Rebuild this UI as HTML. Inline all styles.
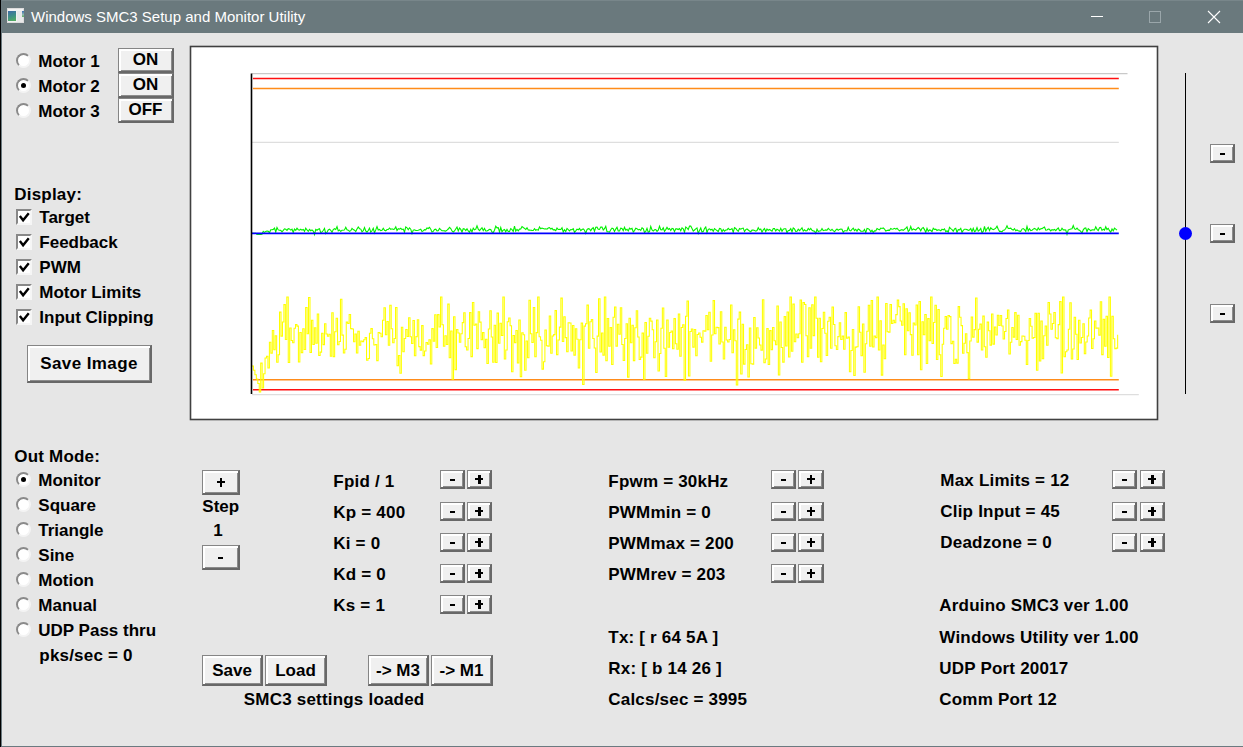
<!DOCTYPE html>
<html><head><meta charset="utf-8"><style>
*{margin:0;padding:0;box-sizing:border-box}
html,body{width:1243px;height:747px;overflow:hidden;background:#e6e6e6;font-family:"Liberation Sans", sans-serif}
#frame{position:absolute;left:0;top:0;width:1243px;height:747px}
#lb{position:absolute;left:0;top:0;width:1px;height:747px;background:#000}
#lb2{position:absolute;left:1px;top:0;width:1px;height:747px;background:#6b7a80}
#bb{position:absolute;left:1px;top:746px;width:1242px;height:1px;background:#6b7a80}
#title{position:absolute;left:1px;top:0;width:1242px;height:33px;background:#6a797d;border-top:1px solid #78868a}
#ttxt{position:absolute;left:31px;top:7px;font:15px "Liberation Sans", sans-serif;color:#fff;white-space:pre;line-height:20px}
.t{position:absolute;font:bold 17px "Liberation Sans", sans-serif;letter-spacing:0;white-space:pre;line-height:20px;color:#000}
.s{letter-spacing:0.2px}
.btn{position:absolute;background:#f0f0f0;border-top:1px solid #858585;border-left:1px solid #858585;border-right:2px solid #686868;border-bottom:2px solid #686868;box-shadow:inset 2px 2px 0 #fff, inset -1px -1px 0 #8c8c8c;display:flex;align-items:center;justify-content:center;font:bold 17px "Liberation Sans", sans-serif;letter-spacing:0;white-space:pre;color:#000}
.mi{display:block;width:5px;height:1.6px;background:#000;margin-top:2px}
.pl{display:block;position:relative;width:8px;height:9px}
.pl:before{content:"";position:absolute;left:0;top:3.5px;width:8px;height:2px;background:#000}
.pl:after{content:"";position:absolute;left:3px;top:0;width:2.5px;height:9px;background:#000}
.rad{position:absolute;width:15px;height:15px;border-radius:50%;background:#fff;border:2px solid;border-color:#8a8a8a #f4f4f4 #f4f4f4 #8a8a8a;transform:rotate(0deg)}
.rad i{position:absolute;left:3px;top:3px;width:5px;height:5px;border-radius:50%;background:#000}
.chk{position:absolute;width:16px;height:16px;background:#fff;border-top:2px solid #888;border-left:2px solid #888;border-right:2px solid #f6f6f6;border-bottom:2px solid #f6f6f6}
.chk svg{position:absolute;left:-2px;top:-2px}
</style></head>
<body>
<svg style="position:absolute;left:0;top:0" width="1243" height="747">
<rect x="190.5" y="46.5" width="967" height="373" fill="#fff" stroke="#404040" stroke-width="1.6"/>
<line x1="252" y1="73.6" x2="1127.5" y2="73.6" stroke="#c9c9c9" stroke-width="1.3"/>
<line x1="252" y1="142.4" x2="1118.8" y2="142.4" stroke="#dedede" stroke-width="1.3"/>
<line x1="252" y1="394.6" x2="1138.8" y2="394.6" stroke="#dedede" stroke-width="1.3"/>
<line x1="253" y1="78.6" x2="1118.8" y2="78.6" stroke="#ff1010" stroke-width="1.5"/>
<line x1="253" y1="88.5" x2="1118.8" y2="88.5" stroke="#ff8c1a" stroke-width="1.4"/>
<line x1="253" y1="379.8" x2="1118.8" y2="379.8" stroke="#ff8c1a" stroke-width="1.4"/>
<line x1="253" y1="389.8" x2="1118.8" y2="389.8" stroke="#ff1010" stroke-width="1.5"/>
<polyline points="252.00,366.0 252.00,366.0 253.45,366.0 253.45,370.3 254.90,370.3 254.90,374.7 256.35,374.7 256.35,379.0 257.80,379.0 257.80,383.4 259.25,383.4 259.25,392.0 260.70,392.0 260.70,363.1 262.15,363.1 262.15,387.9 263.60,387.9 263.60,373.8 265.05,373.8 265.05,357.9 266.50,357.9 266.50,356.3 267.95,356.3 267.95,368.0 269.40,368.0 269.40,342.3 270.85,342.3 270.85,353.1 272.30,353.1 272.30,330.5 273.75,330.5 273.75,349.7 275.20,349.7 275.20,335.8 276.65,335.8 276.65,362.2 278.10,362.2 278.10,354.8 279.55,354.8 279.55,312.1 281.00,312.1 281.00,336.1 282.45,336.1 282.45,322.0 283.90,322.0 283.90,304.6 285.35,304.6 285.35,339.5 286.80,339.5 286.80,297.0 288.25,297.0 288.25,362.5 289.70,362.5 289.70,328.0 291.15,328.0 291.15,340.4 292.60,340.4 292.60,342.8 294.05,342.8 294.05,328.2 295.50,328.2 295.50,324.6 296.95,324.6 296.95,326.1 298.40,326.1 298.40,362.0 299.85,362.0 299.85,332.5 301.30,332.5 301.30,352.6 302.75,352.6 302.75,328.8 304.20,328.8 304.20,349.5 305.65,349.5 305.65,307.4 307.10,307.4 307.10,333.8 308.55,333.8 308.55,297.4 310.00,297.4 310.00,352.4 311.45,352.4 311.45,320.2 312.90,320.2 312.90,344.4 314.35,344.4 314.35,327.7 315.80,327.7 315.80,343.3 317.25,343.3 317.25,313.9 318.70,313.9 318.70,355.5 320.15,355.5 320.15,352.1 321.60,352.1 321.60,333.3 323.05,333.3 323.05,344.6 324.50,344.6 324.50,323.7 325.95,323.7 325.95,334.0 327.40,334.0 327.40,336.2 328.85,336.2 328.85,334.3 330.30,334.3 330.30,356.2 331.75,356.2 331.75,312.7 333.20,312.7 333.20,356.6 334.65,356.6 334.65,331.7 336.10,331.7 336.10,318.3 337.55,318.3 337.55,344.8 339.00,344.8 339.00,341.5 340.45,341.5 340.45,299.3 341.90,299.3 341.90,335.1 343.35,335.1 343.35,353.0 344.80,353.0 344.80,349.3 346.25,349.3 346.25,322.1 347.70,322.1 347.70,323.4 349.15,323.4 349.15,314.4 350.60,314.4 350.60,328.6 352.05,328.6 352.05,329.0 353.50,329.0 353.50,341.7 354.95,341.7 354.95,333.9 356.40,333.9 356.40,352.9 357.85,352.9 357.85,331.3 359.30,331.3 359.30,345.2 360.75,345.2 360.75,340.9 362.20,340.9 362.20,341.6 363.65,341.6 363.65,339.8 365.10,339.8 365.10,337.6 366.55,337.6 366.55,360.3 368.00,360.3 368.00,358.5 369.45,358.5 369.45,333.3 370.90,333.3 370.90,328.6 372.35,328.6 372.35,338.7 373.80,338.7 373.80,344.9 375.25,344.9 375.25,344.5 376.70,344.5 376.70,360.6 378.15,360.6 378.15,332.4 379.60,332.4 379.60,333.3 381.05,333.3 381.05,336.8 382.50,336.8 382.50,320.2 383.95,320.2 383.95,307.8 385.40,307.8 385.40,334.7 386.85,334.7 386.85,321.4 388.30,321.4 388.30,345.3 389.75,345.3 389.75,305.3 391.20,305.3 391.20,328.7 392.65,328.7 392.65,342.8 394.10,342.8 394.10,338.5 395.55,338.5 395.55,307.4 397.00,307.4 397.00,365.8 398.45,365.8 398.45,355.4 399.90,355.4 399.90,373.2 401.35,373.2 401.35,327.2 402.80,327.2 402.80,351.8 404.25,351.8 404.25,338.4 405.70,338.4 405.70,329.5 407.15,329.5 407.15,336.5 408.60,336.5 408.60,317.8 410.05,317.8 410.05,336.8 411.50,336.8 411.50,343.5 412.95,343.5 412.95,320.4 414.40,320.4 414.40,355.8 415.85,355.8 415.85,336.6 417.30,336.6 417.30,319.7 418.75,319.7 418.75,346.6 420.20,346.6 420.20,350.1 421.65,350.1 421.65,325.6 423.10,325.6 423.10,355.6 424.55,355.6 424.55,350.9 426.00,350.9 426.00,342.5 427.45,342.5 427.45,344.2 428.90,344.2 428.90,339.7 430.35,339.7 430.35,363.9 431.80,363.9 431.80,328.6 433.25,328.6 433.25,341.3 434.70,341.3 434.70,314.7 436.15,314.7 436.15,347.4 437.60,347.4 437.60,314.6 439.05,314.6 439.05,327.0 440.50,327.0 440.50,297.0 441.95,297.0 441.95,324.7 443.40,324.7 443.40,346.3 444.85,346.3 444.85,335.7 446.30,335.7 446.30,344.4 447.75,344.4 447.75,304.1 449.20,304.1 449.20,357.7 450.65,357.7 450.65,330.9 452.10,330.9 452.10,379.3 453.55,379.3 453.55,316.8 455.00,316.8 455.00,369.6 456.45,369.6 456.45,329.4 457.90,329.4 457.90,332.9 459.35,332.9 459.35,342.2 460.80,342.2 460.80,333.7 462.25,333.7 462.25,322.6 463.70,322.6 463.70,312.7 465.15,312.7 465.15,346.8 466.60,346.8 466.60,350.0 468.05,350.0 468.05,338.4 469.50,338.4 469.50,312.6 470.95,312.6 470.95,356.6 472.40,356.6 472.40,302.5 473.85,302.5 473.85,325.2 475.30,325.2 475.30,324.1 476.75,324.1 476.75,348.6 478.20,348.6 478.20,311.7 479.65,311.7 479.65,322.1 481.10,322.1 481.10,339.7 482.55,339.7 482.55,332.6 484.00,332.6 484.00,347.7 485.45,347.7 485.45,339.3 486.90,339.3 486.90,363.4 488.35,363.4 488.35,328.9 489.80,328.9 489.80,310.8 491.25,310.8 491.25,336.9 492.70,336.9 492.70,362.3 494.15,362.3 494.15,325.3 495.60,325.3 495.60,362.5 497.05,362.5 497.05,313.1 498.50,313.1 498.50,343.3 499.95,343.3 499.95,323.3 501.40,323.3 501.40,335.5 502.85,335.5 502.85,297.0 504.30,297.0 504.30,358.9 505.75,358.9 505.75,350.0 507.20,350.0 507.20,321.7 508.65,321.7 508.65,318.0 510.10,318.0 510.10,325.7 511.55,325.7 511.55,371.8 513.00,371.8 513.00,335.5 514.45,335.5 514.45,342.6 515.90,342.6 515.90,330.4 517.35,330.4 517.35,363.0 518.80,363.0 518.80,319.9 520.25,319.9 520.25,376.6 521.70,376.6 521.70,332.7 523.15,332.7 523.15,334.8 524.60,334.8 524.60,370.3 526.05,370.3 526.05,340.9 527.50,340.9 527.50,357.8 528.95,357.8 528.95,300.3 530.40,300.3 530.40,333.7 531.85,333.7 531.85,342.4 533.30,342.4 533.30,307.5 534.75,307.5 534.75,356.8 536.20,356.8 536.20,332.6 537.65,332.6 537.65,297.0 539.10,297.0 539.10,336.7 540.55,336.7 540.55,340.3 542.00,340.3 542.00,369.1 543.45,369.1 543.45,361.8 544.90,361.8 544.90,330.0 546.35,330.0 546.35,345.8 547.80,345.8 547.80,346.1 549.25,346.1 549.25,316.0 550.70,316.0 550.70,353.2 552.15,353.2 552.15,335.9 553.60,335.9 553.60,334.6 555.05,334.6 555.05,310.6 556.50,310.6 556.50,354.6 557.95,354.6 557.95,339.9 559.40,339.9 559.40,327.1 560.85,327.1 560.85,298.1 562.30,298.1 562.30,341.5 563.75,341.5 563.75,316.7 565.20,316.7 565.20,337.6 566.65,337.6 566.65,351.7 568.10,351.7 568.10,322.7 569.55,322.7 569.55,323.0 571.00,323.0 571.00,350.9 572.45,350.9 572.45,325.4 573.90,325.4 573.90,355.1 575.35,355.1 575.35,328.7 576.80,328.7 576.80,339.2 578.25,339.2 578.25,368.0 579.70,368.0 579.70,339.8 581.15,339.8 581.15,323.1 582.60,323.1 582.60,384.5 584.05,384.5 584.05,326.1 585.50,326.1 585.50,323.8 586.95,323.8 586.95,305.1 588.40,305.1 588.40,348.2 589.85,348.2 589.85,321.7 591.30,321.7 591.30,319.6 592.75,319.6 592.75,338.5 594.20,338.5 594.20,347.9 595.65,347.9 595.65,372.5 597.10,372.5 597.10,336.1 598.55,336.1 598.55,298.8 600.00,298.8 600.00,351.9 601.45,351.9 601.45,333.0 602.90,333.0 602.90,355.1 604.35,355.1 604.35,297.0 605.80,297.0 605.80,360.7 607.25,360.7 607.25,318.5 608.70,318.5 608.70,346.2 610.15,346.2 610.15,327.6 611.60,327.6 611.60,364.5 613.05,364.5 613.05,317.2 614.50,317.2 614.50,306.9 615.95,306.9 615.95,346.1 617.40,346.1 617.40,324.3 618.85,324.3 618.85,334.2 620.30,334.2 620.30,307.8 621.75,307.8 621.75,344.5 623.20,344.5 623.20,360.4 624.65,360.4 624.65,338.4 626.10,338.4 626.10,323.8 627.55,323.8 627.55,377.1 629.00,377.1 629.00,318.3 630.45,318.3 630.45,342.8 631.90,342.8 631.90,325.3 633.35,325.3 633.35,360.6 634.80,360.6 634.80,327.8 636.25,327.8 636.25,310.7 637.70,310.7 637.70,336.9 639.15,336.9 639.15,359.4 640.60,359.4 640.60,357.1 642.05,357.1 642.05,333.1 643.50,333.1 643.50,379.3 644.95,379.3 644.95,322.5 646.40,322.5 646.40,353.3 647.85,353.3 647.85,336.2 649.30,336.2 649.30,318.2 650.75,318.2 650.75,321.1 652.20,321.1 652.20,329.7 653.65,329.7 653.65,357.7 655.10,357.7 655.10,341.7 656.55,341.7 656.55,320.0 658.00,320.0 658.00,371.0 659.45,371.0 659.45,353.5 660.90,353.5 660.90,328.2 662.35,328.2 662.35,307.9 663.80,307.9 663.80,348.3 665.25,348.3 665.25,376.5 666.70,376.5 666.70,320.0 668.15,320.0 668.15,347.3 669.60,347.3 669.60,332.5 671.05,332.5 671.05,330.9 672.50,330.9 672.50,348.7 673.95,348.7 673.95,318.6 675.40,318.6 675.40,343.7 676.85,343.7 676.85,349.3 678.30,349.3 678.30,314.0 679.75,314.0 679.75,356.2 681.20,356.2 681.20,327.5 682.65,327.5 682.65,324.8 684.10,324.8 684.10,380.1 685.55,380.1 685.55,316.2 687.00,316.2 687.00,301.0 688.45,301.0 688.45,376.0 689.90,376.0 689.90,331.5 691.35,331.5 691.35,328.9 692.80,328.9 692.80,347.1 694.25,347.1 694.25,329.4 695.70,329.4 695.70,355.8 697.15,355.8 697.15,334.5 698.60,334.5 698.60,332.9 700.05,332.9 700.05,337.3 701.50,337.3 701.50,342.1 702.95,342.1 702.95,330.7 704.40,330.7 704.40,331.1 705.85,331.1 705.85,315.4 707.30,315.4 707.30,329.8 708.75,329.8 708.75,312.2 710.20,312.2 710.20,361.2 711.65,361.2 711.65,335.0 713.10,335.0 713.10,300.6 714.55,300.6 714.55,333.8 716.00,333.8 716.00,327.3 717.45,327.3 717.45,327.6 718.90,327.6 718.90,343.9 720.35,343.9 720.35,311.7 721.80,311.7 721.80,341.9 723.25,341.9 723.25,358.9 724.70,358.9 724.70,327.3 726.15,327.3 726.15,339.9 727.60,339.9 727.60,341.9 729.05,341.9 729.05,339.5 730.50,339.5 730.50,305.0 731.95,305.0 731.95,352.7 733.40,352.7 733.40,329.8 734.85,329.8 734.85,340.8 736.30,340.8 736.30,384.9 737.75,384.9 737.75,319.1 739.20,319.1 739.20,312.1 740.65,312.1 740.65,374.0 742.10,374.0 742.10,324.3 743.55,324.3 743.55,364.1 745.00,364.1 745.00,349.4 746.45,349.4 746.45,344.8 747.90,344.8 747.90,377.0 749.35,377.0 749.35,327.9 750.80,327.9 750.80,363.7 752.25,363.7 752.25,364.1 753.70,364.1 753.70,317.4 755.15,317.4 755.15,348.1 756.60,348.1 756.60,327.7 758.05,327.7 758.05,337.9 759.50,337.9 759.50,344.9 760.95,344.9 760.95,350.1 762.40,350.1 762.40,299.8 763.85,299.8 763.85,362.7 765.30,362.7 765.30,359.0 766.75,359.0 766.75,328.6 768.20,328.6 768.20,364.5 769.65,364.5 769.65,330.6 771.10,330.6 771.10,349.6 772.55,349.6 772.55,327.4 774.00,327.4 774.00,340.7 775.45,340.7 775.45,344.7 776.90,344.7 776.90,305.9 778.35,305.9 778.35,374.9 779.80,374.9 779.80,322.0 781.25,322.0 781.25,347.5 782.70,347.5 782.70,362.1 784.15,362.1 784.15,316.6 785.60,316.6 785.60,346.0 787.05,346.0 787.05,311.9 788.50,311.9 788.50,356.9 789.95,356.9 789.95,297.0 791.40,297.0 791.40,351.3 792.85,351.3 792.85,304.1 794.30,304.1 794.30,341.6 795.75,341.6 795.75,334.0 797.20,334.0 797.20,337.8 798.65,337.8 798.65,333.7 800.10,333.7 800.10,300.0 801.55,300.0 801.55,362.2 803.00,362.2 803.00,302.4 804.45,302.4 804.45,304.5 805.90,304.5 805.90,335.8 807.35,335.8 807.35,356.8 808.80,356.8 808.80,307.7 810.25,307.7 810.25,348.3 811.70,348.3 811.70,304.7 813.15,304.7 813.15,335.6 814.60,335.6 814.60,297.0 816.05,297.0 816.05,318.2 817.50,318.2 817.50,357.2 818.95,357.2 818.95,318.2 820.40,318.2 820.40,361.7 821.85,361.7 821.85,328.5 823.30,328.5 823.30,312.2 824.75,312.2 824.75,333.3 826.20,333.3 826.20,355.5 827.65,355.5 827.65,321.2 829.10,321.2 829.10,317.2 830.55,317.2 830.55,348.2 832.00,348.2 832.00,306.9 833.45,306.9 833.45,324.4 834.90,324.4 834.90,345.7 836.35,345.7 836.35,349.4 837.80,349.4 837.80,336.6 839.25,336.6 839.25,322.7 840.70,322.7 840.70,339.5 842.15,339.5 842.15,336.1 843.60,336.1 843.60,349.3 845.05,349.3 845.05,312.6 846.50,312.6 846.50,338.3 847.95,338.3 847.95,337.1 849.40,337.1 849.40,371.8 850.85,371.8 850.85,350.5 852.30,350.5 852.30,329.5 853.75,329.5 853.75,375.5 855.20,375.5 855.20,347.1 856.65,347.1 856.65,346.8 858.10,346.8 858.10,306.8 859.55,306.8 859.55,332.2 861.00,332.2 861.00,355.8 862.45,355.8 862.45,323.9 863.90,323.9 863.90,372.3 865.35,372.3 865.35,343.8 866.80,343.8 866.80,331.3 868.25,331.3 868.25,305.3 869.70,305.3 869.70,346.2 871.15,346.2 871.15,300.4 872.60,300.4 872.60,347.0 874.05,347.0 874.05,336.1 875.50,336.1 875.50,337.6 876.95,337.6 876.95,297.0 878.40,297.0 878.40,349.9 879.85,349.9 879.85,320.8 881.30,320.8 881.30,375.1 882.75,375.1 882.75,345.0 884.20,345.0 884.20,358.8 885.65,358.8 885.65,303.4 887.10,303.4 887.10,331.7 888.55,331.7 888.55,332.1 890.00,332.1 890.00,304.4 891.45,304.4 891.45,323.4 892.90,323.4 892.90,320.2 894.35,320.2 894.35,322.8 895.80,322.8 895.80,314.6 897.25,314.6 897.25,300.1 898.70,300.1 898.70,306.6 900.15,306.6 900.15,321.0 901.60,321.0 901.60,325.2 903.05,325.2 903.05,303.7 904.50,303.7 904.50,354.7 905.95,354.7 905.95,308.8 907.40,308.8 907.40,330.7 908.85,330.7 908.85,312.8 910.30,312.8 910.30,334.6 911.75,334.6 911.75,355.3 913.20,355.3 913.20,323.0 914.65,323.0 914.65,324.9 916.10,324.9 916.10,304.9 917.55,304.9 917.55,354.8 919.00,354.8 919.00,301.4 920.45,301.4 920.45,369.8 921.90,369.8 921.90,321.8 923.35,321.8 923.35,334.7 924.80,334.7 924.80,314.5 926.25,314.5 926.25,363.5 927.70,363.5 927.70,318.6 929.15,318.6 929.15,340.8 930.60,340.8 930.60,297.0 932.05,297.0 932.05,343.4 933.50,343.4 933.50,322.4 934.95,322.4 934.95,305.3 936.40,305.3 936.40,359.5 937.85,359.5 937.85,309.5 939.30,309.5 939.30,354.8 940.75,354.8 940.75,376.4 942.20,376.4 942.20,344.2 943.65,344.2 943.65,328.3 945.10,328.3 945.10,316.4 946.55,316.4 946.55,329.2 948.00,329.2 948.00,315.4 949.45,315.4 949.45,316.6 950.90,316.6 950.90,343.6 952.35,343.6 952.35,341.2 953.80,341.2 953.80,363.5 955.25,363.5 955.25,359.2 956.70,359.2 956.70,363.1 958.15,363.1 958.15,306.6 959.60,306.6 959.60,317.3 961.05,317.3 961.05,325.6 962.50,325.6 962.50,353.3 963.95,353.3 963.95,343.3 965.40,343.3 965.40,333.7 966.85,333.7 966.85,352.6 968.30,352.6 968.30,378.8 969.75,378.8 969.75,340.9 971.20,340.9 971.20,316.9 972.65,316.9 972.65,337.1 974.10,337.1 974.10,329.6 975.55,329.6 975.55,297.9 977.00,297.9 977.00,342.1 978.45,342.1 978.45,329.2 979.90,329.2 979.90,324.1 981.35,324.1 981.35,349.9 982.80,349.9 982.80,316.1 984.25,316.1 984.25,346.7 985.70,346.7 985.70,357.3 987.15,357.3 987.15,322.1 988.60,322.1 988.60,330.7 990.05,330.7 990.05,345.1 991.50,345.1 991.50,313.9 992.95,313.9 992.95,344.1 994.40,344.1 994.40,327.0 995.85,327.0 995.85,334.9 997.30,334.9 997.30,315.3 998.75,315.3 998.75,325.5 1000.20,325.5 1000.20,315.4 1001.65,315.4 1001.65,325.9 1003.10,325.9 1003.10,339.0 1004.55,339.0 1004.55,331.5 1006.00,331.5 1006.00,318.5 1007.45,318.5 1007.45,309.9 1008.90,309.9 1008.90,354.0 1010.35,354.0 1010.35,342.3 1011.80,342.3 1011.80,327.4 1013.25,327.4 1013.25,337.1 1014.70,337.1 1014.70,312.6 1016.15,312.6 1016.15,339.4 1017.60,339.4 1017.60,315.2 1019.05,315.2 1019.05,345.3 1020.50,345.3 1020.50,341.6 1021.95,341.6 1021.95,335.9 1023.40,335.9 1023.40,336.3 1024.85,336.3 1024.85,340.2 1026.30,340.2 1026.30,364.4 1027.75,364.4 1027.75,340.5 1029.20,340.5 1029.20,318.5 1030.65,318.5 1030.65,326.3 1032.10,326.3 1032.10,338.2 1033.55,338.2 1033.55,337.5 1035.00,337.5 1035.00,313.3 1036.45,313.3 1036.45,370.3 1037.90,370.3 1037.90,313.2 1039.35,313.2 1039.35,360.9 1040.80,360.9 1040.80,320.9 1042.25,320.9 1042.25,358.7 1043.70,358.7 1043.70,335.7 1045.15,335.7 1045.15,325.9 1046.60,325.9 1046.60,345.2 1048.05,345.2 1048.05,302.4 1049.50,302.4 1049.50,314.0 1050.95,314.0 1050.95,329.2 1052.40,329.2 1052.40,323.4 1053.85,323.4 1053.85,312.5 1055.30,312.5 1055.30,337.8 1056.75,337.8 1056.75,338.6 1058.20,338.6 1058.20,324.6 1059.65,324.6 1059.65,301.6 1061.10,301.6 1061.10,373.0 1062.55,373.0 1062.55,297.0 1064.00,297.0 1064.00,356.8 1065.45,356.8 1065.45,351.8 1066.90,351.8 1066.90,349.9 1068.35,349.9 1068.35,329.2 1069.80,329.2 1069.80,302.7 1071.25,302.7 1071.25,358.9 1072.70,358.9 1072.70,349.0 1074.15,349.0 1074.15,317.2 1075.60,317.2 1075.60,334.2 1077.05,334.2 1077.05,359.5 1078.50,359.5 1078.50,320.3 1079.95,320.3 1079.95,342.9 1081.40,342.9 1081.40,337.4 1082.85,337.4 1082.85,323.7 1084.30,323.7 1084.30,353.8 1085.75,353.8 1085.75,342.0 1087.20,342.0 1087.20,336.0 1088.65,336.0 1088.65,318.0 1090.10,318.0 1090.10,310.1 1091.55,310.1 1091.55,348.4 1093.00,348.4 1093.00,338.8 1094.45,338.8 1094.45,320.9 1095.90,320.9 1095.90,328.1 1097.35,328.1 1097.35,327.9 1098.80,327.9 1098.80,335.1 1100.25,335.1 1100.25,301.7 1101.70,301.7 1101.70,354.6 1103.15,354.6 1103.15,319.3 1104.60,319.3 1104.60,346.2 1106.05,346.2 1106.05,316.2 1107.50,316.2 1107.50,357.5 1108.95,357.5 1108.95,297.0 1110.40,297.0 1110.40,376.2 1111.85,376.2 1111.85,316.3 1113.30,316.3 1113.30,338.8 1114.75,338.8 1114.75,348.6 1116.20,348.6 1116.20,348.1 1117.65,348.1 1117.65,334.8" fill="none" stroke="#ffff00" stroke-width="1.05"/>
<polyline points="252.00,233.2 253.25,233.2 254.50,233.2 255.75,233.2 257.00,234.5 258.25,234.5 259.50,234.5 260.75,234.5 262.00,234.3 263.25,231.4 264.50,232.4 265.75,231.4 267.00,231.0 268.25,231.3 269.50,232.7 270.75,229.8 272.00,229.7 273.25,229.4 274.50,228.1 275.75,232.0 277.00,227.5 278.25,229.9 279.50,230.3 280.75,230.4 282.00,231.8 283.25,230.4 284.50,228.8 285.75,229.3 287.00,230.4 288.25,228.7 289.50,228.9 290.75,230.1 292.00,229.2 293.25,232.4 294.50,229.1 295.75,230.4 297.00,228.3 298.25,229.7 299.50,230.2 300.75,229.2 302.00,230.1 303.25,229.5 304.50,231.4 305.75,228.2 307.00,230.0 308.25,231.3 309.50,229.3 310.75,230.7 312.00,230.0 313.25,231.0 314.50,234.5 315.75,229.3 317.00,230.2 318.25,229.3 319.50,228.8 320.75,232.7 322.00,231.9 323.25,230.5 324.50,228.5 325.75,233.6 327.00,232.3 328.25,229.9 329.50,229.2 330.75,230.3 332.00,232.4 333.25,229.6 334.50,228.7 335.75,229.4 337.00,226.6 338.25,230.9 339.50,230.0 340.75,231.5 342.00,230.2 343.25,230.3 344.50,229.9 345.75,227.3 347.00,229.8 348.25,230.2 349.50,231.4 350.75,230.7 352.00,228.4 353.25,229.6 354.50,230.2 355.75,231.6 357.00,228.9 358.25,227.0 359.50,228.7 360.75,229.1 362.00,231.8 363.25,230.6 364.50,227.6 365.75,230.9 367.00,232.2 368.25,230.5 369.50,228.1 370.75,232.1 372.00,230.8 373.25,228.3 374.50,232.9 375.75,229.9 377.00,226.6 378.25,230.0 379.50,229.5 380.75,230.6 382.00,230.3 383.25,228.3 384.50,230.3 385.75,230.8 387.00,229.5 388.25,229.5 389.50,228.0 390.75,229.4 392.00,228.8 393.25,229.5 394.50,229.0 395.75,226.9 397.00,230.5 398.25,228.6 399.50,229.2 400.75,228.2 402.00,229.6 403.25,229.1 404.50,232.2 405.75,226.9 407.00,227.8 408.25,229.7 409.50,227.8 410.75,229.2 412.00,233.5 413.25,230.1 414.50,229.8 415.75,230.5 417.00,230.5 418.25,230.3 419.50,229.8 420.75,229.3 422.00,231.5 423.25,230.9 424.50,229.7 425.75,229.9 427.00,228.0 428.25,228.5 429.50,227.3 430.75,229.3 432.00,232.0 433.25,231.4 434.50,229.5 435.75,229.2 437.00,230.9 438.25,230.8 439.50,228.4 440.75,229.6 442.00,230.7 443.25,230.7 444.50,230.9 445.75,231.1 447.00,230.1 448.25,229.0 449.50,227.4 450.75,228.5 452.00,231.0 453.25,232.0 454.50,231.0 455.75,229.0 457.00,227.1 458.25,231.0 459.50,228.1 460.75,229.4 462.00,232.0 463.25,228.7 464.50,229.0 465.75,230.5 467.00,228.8 468.25,231.0 469.50,232.3 470.75,229.3 472.00,232.0 473.25,228.2 474.50,229.9 475.75,229.2 477.00,225.8 478.25,229.2 479.50,230.6 480.75,229.1 482.00,227.7 483.25,230.6 484.50,228.4 485.75,231.0 487.00,231.0 488.25,230.3 489.50,229.3 490.75,229.6 492.00,232.1 493.25,232.6 494.50,230.2 495.75,226.1 497.00,227.8 498.25,227.6 499.50,231.9 500.75,227.5 502.00,231.7 503.25,230.1 504.50,229.4 505.75,231.8 507.00,229.3 508.25,231.5 509.50,231.5 510.75,228.6 512.00,229.6 513.25,231.4 514.50,226.2 515.75,231.1 517.00,229.3 518.25,230.8 519.50,229.1 520.75,229.0 522.00,226.5 523.25,227.5 524.50,228.4 525.75,229.5 527.00,227.8 528.25,230.0 529.50,230.1 530.75,230.2 532.00,230.4 533.25,230.5 534.50,228.6 535.75,230.3 537.00,229.6 538.25,230.2 539.50,226.9 540.75,228.8 542.00,228.1 543.25,228.4 544.50,229.0 545.75,228.8 547.00,229.2 548.25,228.0 549.50,227.6 550.75,229.0 552.00,228.3 553.25,229.9 554.50,229.7 555.75,230.7 557.00,228.1 558.25,229.5 559.50,229.4 560.75,229.5 562.00,227.8 563.25,232.0 564.50,229.7 565.75,231.5 567.00,228.4 568.25,229.7 569.50,230.9 570.75,229.5 572.00,229.7 573.25,228.7 574.50,232.4 575.75,230.8 577.00,229.1 578.25,229.8 579.50,228.4 580.75,230.6 582.00,229.5 583.25,228.9 584.50,230.2 585.75,233.3 587.00,229.5 588.25,228.7 589.50,228.9 590.75,230.8 592.00,228.7 593.25,227.7 594.50,231.2 595.75,227.3 597.00,227.2 598.25,229.3 599.50,229.5 600.75,227.1 602.00,227.0 603.25,230.0 604.50,228.7 605.75,226.4 607.00,231.7 608.25,231.8 609.50,232.2 610.75,229.7 612.00,228.1 613.25,228.7 614.50,231.5 615.75,229.1 617.00,227.3 618.25,230.9 619.50,231.0 620.75,228.1 622.00,228.4 623.25,230.7 624.50,227.3 625.75,230.2 627.00,229.2 628.25,231.0 629.50,228.2 630.75,229.1 632.00,228.4 633.25,232.0 634.50,230.6 635.75,228.2 637.00,228.7 638.25,229.9 639.50,229.3 640.75,230.4 642.00,227.8 643.25,228.7 644.50,232.5 645.75,231.4 647.00,228.3 648.25,232.2 649.50,231.6 650.75,226.4 652.00,230.0 653.25,231.1 654.50,229.8 655.75,229.5 657.00,231.4 658.25,230.2 659.50,226.2 660.75,229.7 662.00,229.9 663.25,227.8 664.50,231.4 665.75,229.6 667.00,227.3 668.25,229.4 669.50,228.5 670.75,230.5 672.00,228.4 673.25,228.8 674.50,231.7 675.75,228.9 677.00,228.9 678.25,229.5 679.50,228.5 680.75,230.7 682.00,227.8 683.25,228.9 684.50,232.4 685.75,226.9 687.00,228.0 688.25,229.7 689.50,226.1 690.75,226.1 692.00,228.6 693.25,231.1 694.50,230.0 695.75,228.8 697.00,227.9 698.25,233.4 699.50,230.4 700.75,228.0 702.00,232.0 703.25,231.6 704.50,228.6 705.75,227.0 707.00,232.7 708.25,229.4 709.50,228.8 710.75,230.0 712.00,229.2 713.25,231.3 714.50,228.6 715.75,229.6 717.00,230.5 718.25,231.5 719.50,228.5 720.75,228.8 722.00,231.7 723.25,229.5 724.50,231.1 725.75,230.0 727.00,229.9 728.25,228.4 729.50,229.6 730.75,229.5 732.00,228.6 733.25,232.3 734.50,227.7 735.75,228.5 737.00,230.2 738.25,231.3 739.50,228.5 740.75,229.2 742.00,228.5 743.25,228.1 744.50,231.6 745.75,229.6 747.00,229.0 748.25,230.0 749.50,231.0 750.75,231.7 752.00,230.1 753.25,230.0 754.50,230.5 755.75,231.2 757.00,230.5 758.25,227.7 759.50,229.8 760.75,229.1 762.00,232.2 763.25,229.8 764.50,228.5 765.75,231.7 767.00,229.0 768.25,230.3 769.50,229.5 770.75,230.3 772.00,231.2 773.25,228.5 774.50,228.6 775.75,230.9 777.00,229.2 778.25,229.9 779.50,231.1 780.75,228.3 782.00,231.2 783.25,229.2 784.50,228.8 785.75,228.8 787.00,232.9 788.25,230.5 789.50,230.4 790.75,228.6 792.00,231.8 793.25,228.0 794.50,228.9 795.75,231.5 797.00,231.3 798.25,229.2 799.50,230.7 800.75,229.3 802.00,227.8 803.25,231.1 804.50,229.8 805.75,230.9 807.00,230.8 808.25,228.4 809.50,229.9 810.75,228.5 812.00,230.3 813.25,230.9 814.50,231.2 815.75,233.3 817.00,229.1 818.25,231.5 819.50,231.0 820.75,230.8 822.00,228.5 823.25,230.6 824.50,230.3 825.75,229.9 827.00,230.2 828.25,228.4 829.50,229.6 830.75,230.6 832.00,229.4 833.25,230.7 834.50,231.8 835.75,230.1 837.00,229.1 838.25,230.3 839.50,229.4 840.75,229.0 842.00,229.2 843.25,232.4 844.50,230.7 845.75,230.8 847.00,231.0 848.25,227.3 849.50,230.4 850.75,230.8 852.00,229.3 853.25,228.2 854.50,230.6 855.75,229.3 857.00,231.3 858.25,229.1 859.50,229.8 860.75,231.2 862.00,231.2 863.25,231.3 864.50,229.4 865.75,232.8 867.00,228.4 868.25,228.8 869.50,229.6 870.75,231.7 872.00,230.3 873.25,232.6 874.50,230.9 875.75,230.9 877.00,228.5 878.25,229.3 879.50,229.8 880.75,228.1 882.00,228.5 883.25,228.0 884.50,229.0 885.75,231.0 887.00,230.4 888.25,230.1 889.50,230.4 890.75,228.5 892.00,229.2 893.25,229.0 894.50,228.3 895.75,229.1 897.00,228.3 898.25,229.6 899.50,230.8 900.75,230.1 902.00,229.7 903.25,230.4 904.50,229.3 905.75,228.4 907.00,226.9 908.25,231.5 909.50,230.1 910.75,226.5 912.00,230.1 913.25,229.0 914.50,229.5 915.75,230.0 917.00,228.7 918.25,227.6 919.50,228.7 920.75,230.8 922.00,228.3 923.25,227.6 924.50,229.6 925.75,232.5 927.00,228.3 928.25,231.3 929.50,229.9 930.75,230.3 932.00,231.7 933.25,228.3 934.50,229.5 935.75,229.2 937.00,230.5 938.25,229.8 939.50,230.0 940.75,230.8 942.00,229.3 943.25,229.9 944.50,228.8 945.75,231.6 947.00,230.8 948.25,232.2 949.50,227.4 950.75,228.6 952.00,229.6 953.25,231.2 954.50,229.0 955.75,228.3 957.00,232.4 958.25,229.6 959.50,229.8 960.75,228.4 962.00,232.4 963.25,230.4 964.50,229.2 965.75,229.3 967.00,229.6 968.25,230.3 969.50,229.9 970.75,228.6 972.00,231.7 973.25,228.3 974.50,231.6 975.75,230.8 977.00,227.6 978.25,231.1 979.50,230.2 980.75,228.5 982.00,232.7 983.25,231.5 984.50,226.5 985.75,231.2 987.00,228.7 988.25,227.3 989.50,230.6 990.75,227.8 992.00,229.1 993.25,229.7 994.50,229.1 995.75,228.1 997.00,226.2 998.25,229.3 999.50,231.4 1000.75,231.4 1002.00,231.8 1003.25,230.2 1004.50,230.0 1005.75,228.5 1007.00,225.8 1008.25,228.5 1009.50,228.4 1010.75,228.2 1012.00,229.6 1013.25,230.1 1014.50,228.6 1015.75,230.8 1017.00,230.0 1018.25,230.8 1019.50,231.1 1020.75,231.4 1022.00,229.1 1023.25,228.6 1024.50,229.7 1025.75,231.4 1027.00,226.3 1028.25,230.8 1029.50,228.8 1030.75,230.6 1032.00,230.2 1033.25,229.1 1034.50,228.4 1035.75,229.1 1037.00,230.4 1038.25,227.9 1039.50,229.7 1040.75,228.7 1042.00,228.6 1043.25,227.8 1044.50,227.1 1045.75,230.2 1047.00,230.0 1048.25,229.0 1049.50,229.3 1050.75,231.0 1052.00,229.7 1053.25,230.1 1054.50,229.4 1055.75,230.6 1057.00,229.1 1058.25,228.0 1059.50,230.6 1060.75,230.5 1062.00,228.2 1063.25,229.9 1064.50,229.9 1065.75,230.1 1067.00,234.3 1068.25,229.9 1069.50,229.6 1070.75,229.0 1072.00,228.7 1073.25,225.5 1074.50,228.9 1075.75,229.3 1077.00,228.0 1078.25,229.7 1079.50,230.3 1080.75,231.3 1082.00,233.0 1083.25,229.8 1084.50,228.3 1085.75,227.9 1087.00,231.6 1088.25,228.7 1089.50,229.6 1090.75,230.7 1092.00,229.8 1093.25,229.9 1094.50,230.0 1095.75,226.8 1097.00,229.3 1098.25,230.5 1099.50,227.7 1100.75,227.4 1102.00,230.4 1103.25,229.2 1104.50,230.2 1105.75,226.8 1107.00,229.5 1108.25,228.3 1109.50,230.7 1110.75,232.2 1112.00,229.0 1113.25,230.9 1114.50,228.2 1115.75,229.1 1117.00,230.1" fill="none" stroke="#00f000" stroke-width="1.1"/>
<line x1="252" y1="233.4" x2="1118.8" y2="233.4" stroke="#0000ff" stroke-width="1.6"/>
<line x1="251.5" y1="73.5" x2="251.5" y2="394" stroke="#000" stroke-width="1.6"/>
</svg>
<div id="frame"><div id="title"></div><div id="lb"></div><div id="lb2"></div><div id="bb"></div><div style="position:absolute;left:7px;top:8px;width:17px;height:15px;background:#f2f2f2;border:1px solid #dcdcdc"><div style="position:absolute;left:0.2px;top:1.9px;width:7.6px;height:9.8px;background:linear-gradient(160deg,#3f6aa8,#3f8f86 50%,#55b05a)"></div><div style="position:absolute;left:8.5px;top:1.5px;width:6px;height:11px;background:#e9e9e9"></div><div style="position:absolute;left:14px;top:2px;width:1.7px;height:6px;background:linear-gradient(#3c6fb0,#8fb8b0 60%,#5fb05f)"></div></div><div id="ttxt">Windows SMC3 Setup and Monitor Utility</div><div style="position:absolute;left:1091px;top:16px;width:12px;height:1px;background:#fff"></div><div style="position:absolute;left:1149px;top:11px;width:12px;height:12px;border:1px solid #9aa6aa"></div><svg style="position:absolute;left:1207px;top:10px" width="14" height="14" viewBox="0 0 14 14"><path d="M1 1 L13 13 M13 1 L1 13" stroke="#fff" stroke-width="1.1"/></svg></div><div class="rad" style="left:15.8px;top:52.8px"></div><div class="t" style="left:38.3px;top:52.1px;">Motor 1</div><div class="btn" style="left:118px;top:48px;width:56px;height:25px;">ON</div><div class="rad" style="left:15.8px;top:77.8px"><i></i></div><div class="t" style="left:38.3px;top:77.1px;">Motor 2</div><div class="btn" style="left:118px;top:73px;width:56px;height:25px;">ON</div><div class="rad" style="left:15.8px;top:102.8px"></div><div class="t" style="left:38.3px;top:102.1px;">Motor 3</div><div class="btn" style="left:118px;top:98px;width:56px;height:25px;">OFF</div><div class="t s" style="left:14.3px;top:184.6px;">Display:</div><div class="chk" style="left:16px;top:209px"><svg width="16" height="16" viewBox="0 0 16 16"><path d="M4.6 7.9 L7.1 11.2 L12 5.2" fill="none" stroke="#000" stroke-width="2.4" stroke-linecap="square"/></svg></div><div class="t" style="left:39.3px;top:208.1px;">Target</div><div class="chk" style="left:16px;top:234px"><svg width="16" height="16" viewBox="0 0 16 16"><path d="M4.6 7.9 L7.1 11.2 L12 5.2" fill="none" stroke="#000" stroke-width="2.4" stroke-linecap="square"/></svg></div><div class="t" style="left:39.3px;top:233.1px;">Feedback</div><div class="chk" style="left:16px;top:259px"><svg width="16" height="16" viewBox="0 0 16 16"><path d="M4.6 7.9 L7.1 11.2 L12 5.2" fill="none" stroke="#000" stroke-width="2.4" stroke-linecap="square"/></svg></div><div class="t" style="left:39.3px;top:258.1px;">PWM</div><div class="chk" style="left:16px;top:284px"><svg width="16" height="16" viewBox="0 0 16 16"><path d="M4.6 7.9 L7.1 11.2 L12 5.2" fill="none" stroke="#000" stroke-width="2.4" stroke-linecap="square"/></svg></div><div class="t" style="left:39.3px;top:283.1px;">Motor Limits</div><div class="chk" style="left:16px;top:309px"><svg width="16" height="16" viewBox="0 0 16 16"><path d="M4.6 7.9 L7.1 11.2 L12 5.2" fill="none" stroke="#000" stroke-width="2.4" stroke-linecap="square"/></svg></div><div class="t" style="left:39.3px;top:308.1px;">Input Clipping</div><div class="btn" style="left:27px;top:345px;width:125px;height:38px;letter-spacing:0.4px">Save Image</div><div class="t s" style="left:14.3px;top:446.6px;">Out Mode:</div><div class="rad" style="left:15.8px;top:471.8px"><i></i></div><div class="t" style="left:38.3px;top:471.1px;">Monitor</div><div class="rad" style="left:15.8px;top:496.8px"></div><div class="t" style="left:38.3px;top:496.1px;">Square</div><div class="rad" style="left:15.8px;top:521.8px"></div><div class="t" style="left:38.3px;top:521.1px;">Triangle</div><div class="rad" style="left:15.8px;top:546.8px"></div><div class="t" style="left:38.3px;top:546.1px;">Sine</div><div class="rad" style="left:15.8px;top:571.8px"></div><div class="t" style="left:38.3px;top:571.1px;">Motion</div><div class="rad" style="left:15.8px;top:596.8px"></div><div class="t" style="left:38.3px;top:596.1px;">Manual</div><div class="rad" style="left:15.8px;top:621.8px"></div><div class="t" style="left:38.3px;top:621.1px;">UDP Pass thru</div><div class="t s" style="left:39.3px;top:646.1px;">pks/sec = 0</div><div class="btn" style="left:202px;top:470px;width:38px;height:25px"><span class="pl"></span></div><div class="t" style="left:202.3px;top:496.5px;">Step</div><div class="t" style="left:213.3px;top:521.4px;">1</div><div class="btn" style="left:202px;top:545px;width:38px;height:25px"><span class="mi"></span></div><div class="t s" style="left:333.3px;top:471.6px;">Fpid / 1</div><div class="btn" style="left:440px;top:470px;width:25px;height:19px"><span class="mi"></span></div><div class="btn" style="left:467px;top:470px;width:25px;height:19px"><span class="pl"></span></div><div class="t s" style="left:333.3px;top:502.6px;">Kp = 400</div><div class="btn" style="left:440px;top:502px;width:25px;height:19px"><span class="mi"></span></div><div class="btn" style="left:467px;top:502px;width:25px;height:19px"><span class="pl"></span></div><div class="t s" style="left:333.3px;top:533.6px;">Ki = 0</div><div class="btn" style="left:440px;top:533px;width:25px;height:19px"><span class="mi"></span></div><div class="btn" style="left:467px;top:533px;width:25px;height:19px"><span class="pl"></span></div><div class="t s" style="left:333.3px;top:564.6px;">Kd = 0</div><div class="btn" style="left:440px;top:564px;width:25px;height:19px"><span class="mi"></span></div><div class="btn" style="left:467px;top:564px;width:25px;height:19px"><span class="pl"></span></div><div class="t s" style="left:333.3px;top:595.6px;">Ks = 1</div><div class="btn" style="left:440px;top:595px;width:25px;height:19px"><span class="mi"></span></div><div class="btn" style="left:467px;top:595px;width:25px;height:19px"><span class="pl"></span></div><div class="btn" style="left:202px;top:655px;width:61px;height:31px;padding-top:2px">Save</div><div class="btn" style="left:265px;top:655px;width:62px;height:31px;padding-top:2px">Load</div><div class="btn" style="left:368px;top:655px;width:61px;height:31px;padding-top:2px">-&gt; M3</div><div class="btn" style="left:431px;top:655px;width:62px;height:31px;padding-top:2px">-&gt; M1</div><div class="t s" style="left:243.8px;top:690.1px;">SMC3 settings loaded</div><div class="t s" style="left:608.3px;top:471.7px;">Fpwm = 30kHz</div><div class="btn" style="left:771px;top:470px;width:25px;height:19px"><span class="mi"></span></div><div class="btn" style="left:798px;top:470px;width:26px;height:19px"><span class="pl"></span></div><div class="t s" style="left:608.3px;top:502.7px;">PWMmin = 0</div><div class="btn" style="left:771px;top:502px;width:25px;height:19px"><span class="mi"></span></div><div class="btn" style="left:798px;top:502px;width:26px;height:19px"><span class="pl"></span></div><div class="t s" style="left:608.3px;top:533.7px;">PWMmax = 200</div><div class="btn" style="left:771px;top:533px;width:25px;height:19px"><span class="mi"></span></div><div class="btn" style="left:798px;top:533px;width:26px;height:19px"><span class="pl"></span></div><div class="t s" style="left:608.3px;top:564.7px;">PWMrev = 203</div><div class="btn" style="left:771px;top:564px;width:25px;height:19px"><span class="mi"></span></div><div class="btn" style="left:798px;top:564px;width:26px;height:19px"><span class="pl"></span></div><div class="t s" style="left:608.3px;top:628.0px;">Tx: [ r 64 5A ]</div><div class="t s" style="left:608.3px;top:659.0px;">Rx: [ b 14 26 ]</div><div class="t s" style="left:608.3px;top:690.0px;">Calcs/sec = 3995</div><div class="t s" style="left:940.3px;top:471.2px;">Max Limits = 12</div><div class="btn" style="left:1112px;top:470px;width:25px;height:19px"><span class="mi"></span></div><div class="btn" style="left:1140px;top:470px;width:25px;height:19px"><span class="pl"></span></div><div class="t s" style="left:940.3px;top:502.2px;">Clip Input = 45</div><div class="btn" style="left:1112px;top:502px;width:25px;height:19px"><span class="mi"></span></div><div class="btn" style="left:1140px;top:502px;width:25px;height:19px"><span class="pl"></span></div><div class="t s" style="left:940.3px;top:533.2px;">Deadzone = 0</div><div class="btn" style="left:1112px;top:533px;width:25px;height:19px"><span class="mi"></span></div><div class="btn" style="left:1140px;top:533px;width:25px;height:19px"><span class="pl"></span></div><div class="t s" style="left:939.3px;top:596.3px;">Arduino SMC3 ver 1.00</div><div class="t s" style="left:939.3px;top:627.5px;">Windows Utility ver 1.00</div><div class="t s" style="left:939.3px;top:658.7px;">UDP Port 20017</div><div class="t s" style="left:939.3px;top:689.9px;">Comm Port 12</div><div style="position:absolute;left:1184.5px;top:73px;width:1.6px;height:321px;background:#000"></div><div style="position:absolute;left:1179px;top:227px;width:13px;height:13px;border-radius:50%;background:#0000ff"></div><div class="btn" style="left:1210px;top:144px;width:25px;height:19px"><span class="mi"></span></div><div class="btn" style="left:1210px;top:224px;width:25px;height:19px"><span class="mi"></span></div><div class="btn" style="left:1210px;top:304px;width:25px;height:19px"><span class="mi"></span></div>
</body></html>
